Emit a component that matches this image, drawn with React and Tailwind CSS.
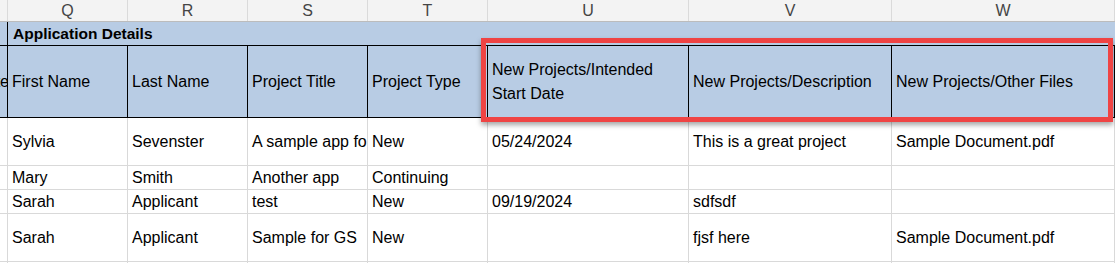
import React from "react";

// column template: P (cut off), Q..W
const cols = "grid grid-cols-[8px_120px_120px_120px_120px_201px_203px_1fr]";

const letters = ["", "Q", "R", "S", "T", "U", "V", "W"];

const headers = [
  "Submitted Date",
  "First Name",
  "Last Name",
  "Project Title",
  "Project Type",
  null, // two-line header, rendered below
  "New Projects/Description",
  "New Projects/Other Files",
];

const rows = [
  { h: "h-[48px]", cells: ["", "Sylvia", "Sevenster", "A sample app for testing", "New", "05/24/2024", "This is a great project", "Sample Document.pdf"] },
  { h: "h-[24px]", cells: ["", "Mary", "Smith", "Another app", "Continuing", "", "", ""] },
  { h: "h-[24px]", cells: ["", "Sarah", "Applicant", "test", "New", "09/19/2024", "sdfsdf", ""] },
  { h: "h-[48px]", cells: ["", "Sarah", "Applicant", "Sample for GS", "New", "", "fjsf here", "Sample Document.pdf"] },
  { h: "h-[24px]", cells: ["", "", "", "", "", "", "", ""] },
];

const App = () => {
  return (
    <div className="relative w-[1115px] h-[263px] overflow-hidden bg-white text-[16px] text-black font-['Liberation_Sans',Arial,sans-serif]">
      {/* Column letters */}
      <div className={`${cols} h-[22px] bg-[#f3f3f3] border-b border-[#bcbcbc]`}>
        {letters.map((l, i) => (
          <div key={i} className="flex items-center justify-center border-r border-[#dadada] text-[#444] text-[16px] leading-none">
            {l}
          </div>
        ))}
      </div>

      {/* Section title row */}
      <div className={`${cols} h-[24px] bg-[#b8cce4] border-b border-black`}>
        <div className="border-r border-black"></div>
        <div className="col-span-7 flex items-center pl-[5px] font-bold text-[15.5px] whitespace-nowrap">
          Application Details
        </div>
      </div>

      {/* Header row */}
      <div className={`${cols} h-[72px] bg-[#b8cce4] border-b border-black`}>
        {headers.map((h, i) => (
          <div
            key={i}
            className={`flex items-center border-r border-black overflow-hidden whitespace-nowrap ${i === 0 ? "justify-end" : "pl-[4px]"}`}
          >
            {h === null ? (
              <span className="leading-6 whitespace-normal">
                New Projects/Intended
                <br />
                Start Date
              </span>
            ) : (
              <span className={i === 0 ? "-mr-[2px]" : ""}>{h}</span>
            )}
          </div>
        ))}
      </div>

      {/* Data rows */}
      {rows.map((r, ri) => (
        <div key={ri} className={`${cols} ${r.h} border-b border-[#d9d9d9]`}>
          {r.cells.map((c, ci) => (
            <div key={ci} className="flex items-center pl-[4px] border-r border-[#d9d9d9] overflow-hidden whitespace-nowrap">
              {c}
            </div>
          ))}
        </div>
      ))}

      {/* Highlight box drawn over the header cells */}
      <div className="absolute left-[481px] top-[38px] w-[632px] h-[84px] border-[5px] border-[#ef4444] shadow-[0_3px_5px_rgba(0,0,0,0.35)]"></div>
    </div>
  );
};

export default App;
